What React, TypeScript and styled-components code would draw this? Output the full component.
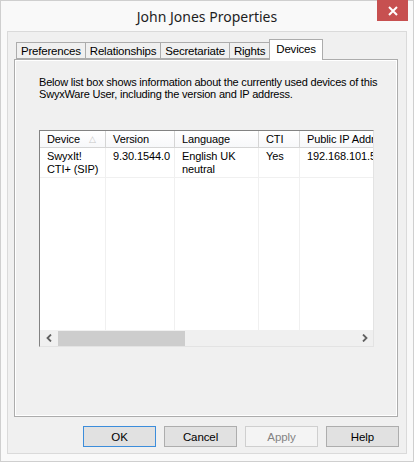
import React from "react";
import styled, { createGlobalStyle } from "styled-components";

const GlobalStyle = createGlobalStyle`
  html, body {
    margin: 0;
    padding: 0;
    background: #ffffff;
  }
`;

const uiFont = `"Noto Sans", "Open Sans", sans-serif`;
const dlgFont = `"Liberation Sans", Arial, sans-serif`;

const Window = styled.div`
  box-sizing: border-box;
  width: 414px;
  height: 462px;
  border: 1px solid #cfcfcf;
  background: #f9f9f9;
  display: flex;
  flex-direction: column;
  padding: 0 6px 7px 6px;
`;

const TitleBar = styled.div`
  position: relative;
  height: 29px;
  display: flex;
  align-items: center;
  justify-content: center;
  font-family: ${uiFont};
  font-size: 14px;
  color: #1e1e1e;
  padding-top: 1px;
`;

const CloseButton = styled.div`
  position: absolute;
  top: -1px;
  right: -1px;
  width: 31px;
  height: 21px;
  background: #c75050;
  display: flex;
  align-items: center;
  justify-content: center;
`;

const Client = styled.div`
  flex: 1;
  border: 1px solid #dadada;
  background: #f0f0f0;
  display: flex;
  flex-direction: column;
  padding: 7px 8px 0 6px;
`;

const TabStrip = styled.div`
  display: flex;
  align-items: flex-end;
  height: 20px;
  padding-left: 2px;
  position: relative;
  z-index: 1;
`;

const Tab = styled.div<{ $active?: boolean }>`
  box-sizing: border-box;
  min-width: 41px;
  height: ${(p) => (p.$active ? "21px" : "17px")};
  margin-bottom: ${(p) => (p.$active ? "-1px" : "0")};
  margin-left: -1px;
  padding: ${(p) => (p.$active ? "0 6px 3px 6px" : "0 4px")};
  border: 1px solid #acacac;
  border-bottom: ${(p) => (p.$active ? "none" : "1px solid #acacac")};
  background: ${(p) => (p.$active ? "#ffffff" : "#f0f0f0")};
  font-family: ${dlgFont};
  font-size: 11.5px;
  letter-spacing: -0.2px;
  color: #000;
  display: flex;
  align-items: center;
  justify-content: center;
  white-space: nowrap;
  &:first-child {
    margin-left: 0;
  }
`;

const Panel = styled.div`
  box-sizing: border-box;
  height: 358px;
  border: 1px solid #acacac;
  box-shadow: inset 1px 1px 0 #ffffff, inset -1px -1px 0 #ffffff;
  background: #f0f0f0;
  padding: 16px 0 0 24px;
  display: flex;
  flex-direction: column;
`;

const Description = styled.p`
  margin: 0;
  font-family: ${dlgFont};
  font-size: 11px;
  line-height: 12px;
  color: #000;
  width: 345px;
  letter-spacing: -0.2px;
`;

const ListBox = styled.div`
  box-sizing: border-box;
  margin-top: 30px;
  width: 335px;
  height: 217px;
  border-top: 1px solid #828282;
  border-left: 1px solid #828282;
  border-right: 1px solid #e3e3e3;
  border-bottom: 1px solid #e3e3e3;
  background: #ffffff;
  display: flex;
  flex-direction: column;
  overflow: hidden;
`;

const Grid = styled.div`
  flex: 1;
  display: grid;
  grid-template-columns: 66px 69px 84px 41px 80px;
  grid-template-rows: 17px 30px 1fr;
  font-family: ${dlgFont};
  font-size: 11px;
  letter-spacing: -0.1px;
  color: #000;
  overflow: hidden;
`;

const HeaderCell = styled.div`
  box-sizing: border-box;
  border-right: 1px solid #d5d5d5;
  border-bottom: 1px solid #d5d5d5;
  background: linear-gradient(#ffffff, #f7f8fa);
  padding: 0 0 0 7px;
  display: flex;
  align-items: center;
  white-space: nowrap;
  overflow: hidden;
`;

const SortMark = styled.span`
  margin-left: 9px;
  color: #c6c6c6;
  font-size: 9px;
`;

const Cell = styled.div`
  box-sizing: border-box;
  border-right: 1px solid #f0f0f0;
  border-bottom: 1px solid #f0f0f0;
  padding: 2px 0 0 7px;
  line-height: 13px;
  white-space: nowrap;
  overflow: hidden;
`;

const Filler = styled.div`
  border-right: 1px solid #f0f0f0;
`;

const ScrollBar = styled.div`
  height: 16px;
  background: #f0f0f0;
  display: flex;
  align-items: center;
`;

const Arrow = styled.div`
  width: 18px;
  height: 16px;
  display: flex;
  align-items: center;
  justify-content: center;
`;

const Track = styled.div`
  flex: 1;
  height: 15px;
  display: flex;
`;

const Thumb = styled.div`
  width: 127px;
  height: 15px;
  background: #cdcdcd;
`;

const ButtonRow = styled.div`
  display: flex;
  justify-content: flex-end;
  gap: 8px;
  padding: 9px 0 0 0;
  margin-right: -1px;
`;

const Button = styled.div<{ $default?: boolean; $disabled?: boolean }>`
  box-sizing: border-box;
  width: 73px;
  height: 21px;
  border: 1px solid
    ${(p) => (p.$default ? "#3c8ddb" : p.$disabled ? "#cfcfcf" : "#adadad")};
  background: ${(p) => (p.$disabled ? "#f4f4f4" : "#e1e1e1")};
  color: ${(p) => (p.$disabled ? "#838383" : "#000")};
  font-family: ${dlgFont};
  font-size: 11.5px;
  letter-spacing: -0.1px;
  display: flex;
  align-items: center;
  justify-content: center;
`;

const Chevron = ({ dir }: { dir: "left" | "right" }) => (
  <svg width="7" height="8" viewBox="0 0 7 8">
    <path
      d={dir === "left" ? "M5 0.5 L1.5 4 L5 7.5" : "M2 0.5 L5.5 4 L2 7.5"}
      stroke="#606060"
      strokeWidth="1.8"
      fill="none"
    />
  </svg>
);

const columns = ["Version", "Language", "CTI", "Public IP Addr"];

const App: React.FC = () => {
  return (
    <>
      <GlobalStyle />
      <Window>
        <TitleBar>
          John Jones Properties
          <CloseButton>
            <svg width="10" height="10" viewBox="0 0 10 10">
              <path d="M1 1 L9 9 M9 1 L1 9" stroke="#ffffff" strokeWidth="2" />
            </svg>
          </CloseButton>
        </TitleBar>
        <Client>
          <TabStrip>
            <Tab>Preferences</Tab>
            <Tab>Relationships</Tab>
            <Tab>Secretariate</Tab>
            <Tab>Rights</Tab>
            <Tab $active>Devices</Tab>
          </TabStrip>
          <Panel>
            <Description>
              Below list box shows information about the currently used devices
              of this SwyxWare User, including the version and IP address.
            </Description>
            <ListBox>
              <Grid>
                <HeaderCell>
                  Device<SortMark>△</SortMark>
                </HeaderCell>
                {columns.map((c) => (
                  <HeaderCell key={c}>{c}</HeaderCell>
                ))}
                <Cell>
                  SwyxIt!
                  <br />
                  CTI+ (SIP)
                </Cell>
                <Cell>9.30.1544.0</Cell>
                <Cell>
                  English UK
                  <br />
                  neutral
                </Cell>
                <Cell>Yes</Cell>
                <Cell>192.168.101.5</Cell>
                <Filler />
                <Filler />
                <Filler />
                <Filler />
                <Filler />
              </Grid>
              <ScrollBar>
                <Arrow>
                  <Chevron dir="left" />
                </Arrow>
                <Track>
                  <Thumb />
                </Track>
                <Arrow>
                  <Chevron dir="right" />
                </Arrow>
              </ScrollBar>
            </ListBox>
          </Panel>
          <ButtonRow>
            <Button $default>OK</Button>
            <Button>Cancel</Button>
            <Button $disabled>Apply</Button>
            <Button>Help</Button>
          </ButtonRow>
        </Client>
      </Window>
    </>
  );
};

export default App;
